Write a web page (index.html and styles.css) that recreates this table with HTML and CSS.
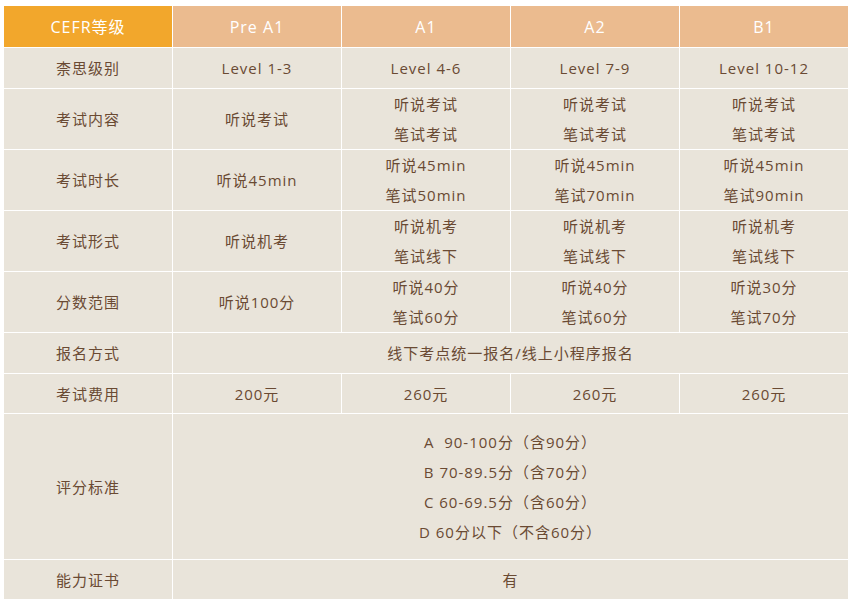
FILE: index.html
```html
<!DOCTYPE html>
<html>
<head>
<meta charset="utf-8">
<link rel="stylesheet" href="styles.css">
</head>
<body>
<table class="cefr">
  <colgroup>
    <col class="c-label"><col class="c-val"><col class="c-val"><col class="c-val"><col class="c-val">
  </colgroup>
  <thead>
    <tr class="r-head">
      <th class="h-main">CEFR等级</th>
      <th>Pre A1</th>
      <th>A1</th>
      <th>A2</th>
      <th>B1</th>
    </tr>
  </thead>
  <tbody>
    <tr class="r-s">
      <td>柰思级别</td>
      <td>Level 1-3</td>
      <td>Level 4-6</td>
      <td>Level 7-9</td>
      <td>Level 10-12</td>
    </tr>
    <tr class="r-d">
      <td>考试内容</td>
      <td>听说考试</td>
      <td><div class="ln">听说考试</div><div class="ln">笔试考试</div></td>
      <td><div class="ln">听说考试</div><div class="ln">笔试考试</div></td>
      <td><div class="ln">听说考试</div><div class="ln">笔试考试</div></td>
    </tr>
    <tr class="r-d">
      <td>考试时长</td>
      <td>听说45min</td>
      <td><div class="ln">听说45min</div><div class="ln">笔试50min</div></td>
      <td><div class="ln">听说45min</div><div class="ln">笔试70min</div></td>
      <td><div class="ln">听说45min</div><div class="ln">笔试90min</div></td>
    </tr>
    <tr class="r-d">
      <td>考试形式</td>
      <td>听说机考</td>
      <td><div class="ln">听说机考</div><div class="ln">笔试线下</div></td>
      <td><div class="ln">听说机考</div><div class="ln">笔试线下</div></td>
      <td><div class="ln">听说机考</div><div class="ln">笔试线下</div></td>
    </tr>
    <tr class="r-d">
      <td>分数范围</td>
      <td>听说100分</td>
      <td><div class="ln">听说40分</div><div class="ln">笔试60分</div></td>
      <td><div class="ln">听说40分</div><div class="ln">笔试60分</div></td>
      <td><div class="ln">听说30分</div><div class="ln">笔试70分</div></td>
    </tr>
    <tr class="r-s">
      <td>报名方式</td>
      <td colspan="4">线下考点统一报名/线上小程序报名</td>
    </tr>
    <tr class="r-s r-fee">
      <td>考试费用</td>
      <td>200元</td>
      <td>260元</td>
      <td>260元</td>
      <td>260元</td>
    </tr>
    <tr class="r-grade">
      <td>评分标准</td>
      <td colspan="4">
        <div class="ln">A&nbsp; 90-100分（含90分）</div>
        <div class="ln">B 70-89.5分（含70分）</div>
        <div class="ln">C 60-69.5分（含60分）</div>
        <div class="ln">D 60分以下（不含60分）</div>
      </td>
    </tr>
    <tr class="r-s r-fee">
      <td>能力证书</td>
      <td colspan="4">有</td>
    </tr>
  </tbody>
</table>
</body>
</html>
```
FILE: styles.css
```css
html, body {
  margin: 0;
  padding: 0;
  background: #ffffff;
}
body {
  padding: 5px 0 0 3px;
  font-family: "Open Sans", "Noto Sans CJK SC", sans-serif;
}
.cefr {
  border-collapse: collapse;
  width: 846px;
  table-layout: fixed;
  font-size: 15px;
  letter-spacing: 1px;
  color: #6a4a33;
}
.c-label { width: 169px; }
.c-val { width: 169px; }
.cefr th, .cefr td {
  border: 1px solid #ffffff;
  text-align: center;
  vertical-align: middle;
  padding: 0;
  line-height: 30px;
}
.cefr th {
  background: #ebbb8f;
  color: #ffffff;
  font-size: 16px;
  font-weight: 400;
  height: 41px;
}
.cefr th.h-main {
  background: #f2a72c;
}
.cefr td {
  background: #e9e4da;
}
.r-s td { height: 40px; }
.r-fee td { height: 39px; }
.r-d td { height: 60px; }
.r-grade td { height: 145px; }
.ln { line-height: 30px; }
```
